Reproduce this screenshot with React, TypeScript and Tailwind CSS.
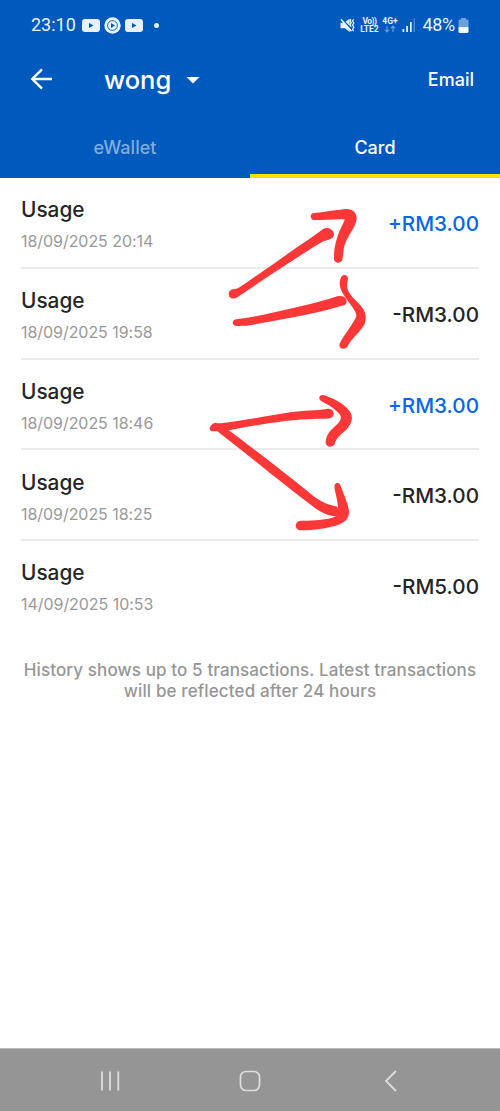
import { FC } from 'react'

interface ITransaction {
  title: string
  date: string
  amount: string
}

interface ITransactionRowProps {
  item: ITransaction
}

const transactions: ITransaction[] = [
  { title: 'Usage', date: '18/09/2025 20:14', amount: '+RM3.00' },
  { title: 'Usage', date: '18/09/2025 19:58', amount: '-RM3.00' },
  { title: 'Usage', date: '18/09/2025 18:46', amount: '+RM3.00' },
  { title: 'Usage', date: '18/09/2025 18:25', amount: '-RM3.00' },
  { title: 'Usage', date: '14/09/2025 10:53', amount: '-RM5.00' },
]

const VideoIcon: FC = () => (
  <svg width="18" height="13" viewBox="0 0 18 13">
    <rect width="18" height="13" rx="3" fill="#e9f2fc" />
    <path d="M7 4l4.5 2.5L7 9z" fill="#0059bd" />
  </svg>
)

const MusicIcon: FC = () => (
  <svg width="17" height="17" viewBox="0 0 17 17">
    <circle cx="8.5" cy="8.5" r="8.2" fill="#e9f2fc" />
    <circle cx="8.5" cy="8.5" r="4.9" fill="none" stroke="#0059bd" strokeWidth="0.9" />
    <path d="M7 6l4 2.5L7 11z" fill="#0059bd" />
  </svg>
)

const MuteIcon: FC = () => (
  <svg width="15" height="15" viewBox="0 0 15 15" fill="#e9f2fc">
    <path d="M0.5 4.8h3.7l5.6 5.5v3.7L5 10.3H0.5z" />
    <path d="M5.5 3.8L9.6 0.8v7z" />
    <path d="M1 1.2l10.5 12" stroke="#e9f2fc" strokeWidth="1.5" />
    <path
      d="M11 1.2l-1 1.5 1.2 2-1.2 2 1.2 2M13.6 1.2l-1 1.8 1.2 2-1.2 2 1.2 2.2-1.2 2 1 2"
      fill="none"
      stroke="#e9f2fc"
      strokeWidth="1.3"
    />
  </svg>
)

const StatusBar: FC = () => (
  <div className="flex h-[50px] items-center justify-between pl-[31px] pr-[31px] font-['Roboto',sans-serif] text-[#e9f2fc]">
    <div className="flex items-center">
      <span className="w-[51px] text-[18px] leading-none">23:10</span>
      <VideoIcon />
      <span className="mx-[4px]">
        <MusicIcon />
      </span>
      <VideoIcon />
      <span className="ml-[11px] size-[5px] rounded-full bg-[#e9f2fc]" />
    </div>
    <div className="flex items-center">
      <MuteIcon />
      <div className="ml-[4px] w-[20px] text-center text-[8.5px] leading-[8px] font-bold">
        <div className="whitespace-nowrap tracking-[-0.5px]">Vo))</div>
        <div>LTE2</div>
      </div>
      <div className="ml-[2px] flex w-[17px] flex-col items-center text-[8.5px] leading-[8px] font-bold">
        <div>4G+</div>
        <svg width="12" height="8" viewBox="0 0 12 8" fill="none" stroke="#6c9fdb" strokeWidth="1.1">
          <path d="M3 1v6M0.8 4.6L3 7l2.2-2.4M9 7V1M6.8 3.4L9 1l2.2 2.4" />
        </svg>
      </div>
      <svg className="ml-[4px]" width="14" height="14" viewBox="0 0 14 14" fill="#e9f2fc">
        <rect x="0.5" y="11" width="1.7" height="3" />
        <rect x="4.2" y="8" width="1.7" height="6" />
        <rect x="8" y="4" width="1.7" height="10" />
        <rect x="11.6" y="0.5" width="1.4" height="13.5" fill="#4c8cd5" />
      </svg>
      <span className="ml-[6px] text-[18px] leading-none tracking-[-0.3px]">48%</span>
      <svg className="ml-[3px]" width="11" height="15" viewBox="0 0 11 15">
        <path d="M3 0h5v1.5h1.5q1 0 1 1V9H0.5V2.5q0-1 1-1H3z" fill="#6c9fdb" />
        <path d="M0.5 9h10v4.5q0 1.5-1.5 1.5H2q-1.5 0-1.5-1.5z" fill="#f4f9ff" />
      </svg>
    </div>
  </div>
)

const Header: FC = () => (
  <header className="h-[178px] bg-[#0059bd] text-white">
    <StatusBar />
    <div className="flex h-[60px] items-center pl-[30px] pr-[26px]">
      <svg className="-mt-[2px]" width="23" height="22" viewBox="0 0 23 22" fill="none" stroke="white" strokeWidth="2.4">
        <path d="M22 11H2.4M12 1.3L2.3 11l9.7 9.7" />
      </svg>
      <h1 className="ml-[51px] text-[25.5px] leading-none font-medium">wong</h1>
      <svg className="ml-[15px]" width="14" height="7" viewBox="0 0 14 7">
        <path d="M0.5 0h13L7 6.5z" fill="white" />
      </svg>
      <button className="-mt-[1px] ml-auto text-[18px] font-medium">Email</button>
    </div>
    <nav className="flex h-[68px] text-[18px] font-medium">
      <button className="flex-1 border-b-4 border-transparent pt-[10px] text-[#80acde]">eWallet</button>
      <button className="flex-1 border-b-4 border-[#fbdb0a] pt-[10px]">Card</button>
    </nav>
  </header>
)

const TransactionRow: FC<ITransactionRowProps> = ({ item }) => (
  <li className="flex h-[90.75px] items-center justify-between border-b-2 border-[#e9ebec] last:border-transparent">
    <div className="pt-[7px]">
      <div className="text-[20.8px] leading-[28px] font-[450] text-[#252525]">{item.title}</div>
      <div className="mt-[3px] text-[16px] leading-[28px] tracking-[-0.05px] text-[#999]">{item.date}</div>
    </div>
    <div
      className={`pt-[2.5px] text-[20.7px] font-[450] ${item.amount.startsWith('+') ? 'text-[#0767e8]' : 'text-[#252525]'}`}
    >
      {item.amount}
    </div>
  </li>
)

// Freehand marker strokes drawn over the list
const MarkerArrows: FC = () => (
  <svg
    className="pointer-events-none absolute top-[12px] left-[200px]"
    width="300"
    height="360"
    viewBox="0 0 900 1080"
    fill="#fb3738"
  >
    <path d="M86 310C88 298 100 296 110 296C125 290 180 248 230 215C290 172 340 140 368 118C385 108 402 120 402 134C400 148 385 148 370 154C300 195 200 262 122 315C112 324 96 330 88 320Z" />
    <path d="M338 70C370 66 420 58 440 57C460 57 471 70 470 88C466 115 440 140 432 172C430 190 428 200 427 210C420 222 404 220 402 208C402 180 405 160 416 130C424 110 432 98 434 88C410 86 370 90 340 90C330 86 330 74 338 70Z" />
    <path d="M108 388C160 382 220 368 280 354C340 340 380 330 412 319C432 315 440 325 440 336C438 348 425 346 410 352C330 376 220 392 150 406C135 408 120 408 108 408C95 405 95 391 108 388Z" />
    <path d="M424 260C430 252 444 254 444 266C440 285 440 295 448 308C458 325 480 340 490 358C500 375 498 388 494 402C484 422 455 445 442 470C434 480 418 478 418 464C424 445 455 410 468 382C474 370 455 350 440 328C424 305 412 285 424 260Z" />
    <g transform="translate(0 540)">
      <path d="M30 172C32 165 40 158 48 158C55 160 58 160 62 160C120 154 200 138 270 127C310 121 350 122 380 117C394 114 402 124 401 133C400 144 388 147 375 146C310 146 250 152 180 164C140 170 100 178 82 182L70 180C60 182 52 184 40 184C30 184 28 178 30 172Z" />
      <path d="M52 180L82 178C150 228 250 305 330 370C360 395 380 404 412 410L420 440C390 440 365 430 340 410C260 350 150 260 52 184Z" />
      <path d="M360 78C366 72 376 76 384 80C410 88 440 108 452 128C460 145 455 160 440 178C420 196 408 206 405 220C400 234 380 234 377 220C376 195 392 180 410 164C430 145 424 134 408 122C392 106 372 98 362 92C357 88 357 82 360 78Z" />
      <path d="M404 345C408 336 420 338 422 348C430 370 446 405 447 425C447 445 436 456 415 464C380 476 340 480 304 481C288 481 284 468 290 458C296 450 310 453 325 452C355 450 385 448 405 440C418 432 415 410 410 385C406 365 402 355 404 345Z" />
    </g>
  </svg>
)

const NavigationBar: FC = () => (
  <footer className="flex h-[63px] items-center justify-around border-t border-[#bbb] bg-[#959595] pr-[39px] pl-[41px] pt-[2px]">
    <svg width="20" height="20" viewBox="0 0 20 20" stroke="#dedede" strokeWidth="1.8">
      <path d="M2 0.5v19M10 0.5v19M18.3 0.5v19" />
    </svg>
    <svg width="22" height="22" viewBox="0 0 22 22" fill="none" stroke="#dedede" strokeWidth="1.7">
      <rect x="1.5" y="1.5" width="19" height="19" rx="5.5" />
    </svg>
    <svg width="22" height="22" viewBox="0 0 22 22" fill="none" stroke="#dedede" strokeWidth="1.8">
      <path d="M16 1L6 11l10 10" />
    </svg>
  </footer>
)

const App: FC = () => (
  <div className="flex h-[1111px] w-[500px] flex-col bg-white font-['Inter',sans-serif]">
    <Header />
    <main className="relative flex-1">
      <ul className="px-[21px]">
        {transactions.map((item) => (
          <TransactionRow item={item} key={item.date} />
        ))}
      </ul>
      <p className="mt-[28px] text-center text-[17px] leading-[21px] font-[450] tracking-[0.12px] text-[#969696]">
        History shows up to 5 transactions. Latest transactions
        <br />
        will be reflected after 24 hours
      </p>
      <MarkerArrows />
    </main>
    <NavigationBar />
  </div>
)

export default App
